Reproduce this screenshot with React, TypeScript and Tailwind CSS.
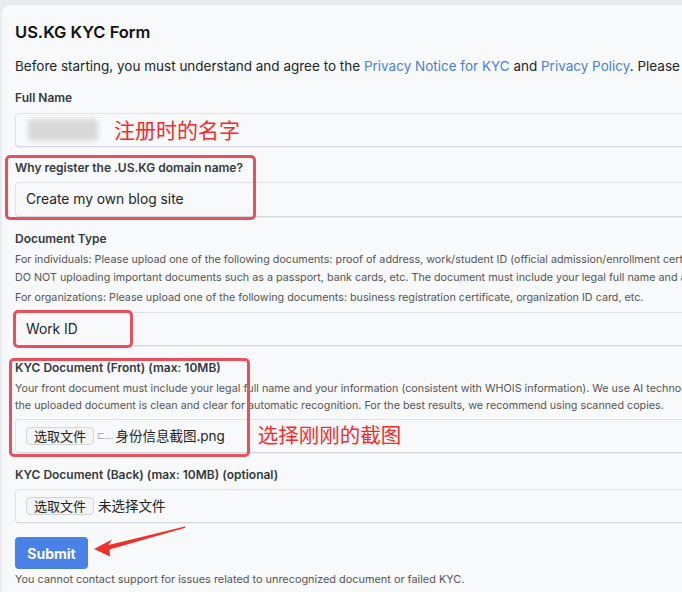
import React from "react";

const Label = ({ children, className = "" }: { children: React.ReactNode; className?: string }) => (
  <div className={`text-[12px] leading-[16px] font-semibold text-[#343a40] ${className}`}>{children}</div>
);

const Field = ({ children, className = "" }: { children: React.ReactNode; className?: string }) => (
  <div
    className={`h-[34px] flex items-center px-[10px] bg-[#f8f9fa] border border-[#dee2e6] border-b-[#d3d7db] rounded-[4px] shadow-[0_1px_0_rgba(0,0,0,0.04)] ${className}`}
  >
    {children}
  </div>
);

const FileButton = () => (
  <span className="inline-flex items-center justify-center h-[18px] px-[7px] text-[13px] leading-none text-[#222] bg-[#f4f4f4] border border-[#d6d6d6] rounded-[4px]">
    选取文件
  </span>
);

const Annotation = ({ className }: { className: string }) => (
  <div className={`absolute border-[3px] border-[#e9505d] rounded-[5px] pointer-events-none ${className}`} />
);

export default function App() {
  return (
    <div className="relative w-full h-[592px] overflow-hidden bg-[#e9ecef] pt-[5px] pl-[2px] font-['Inter','Noto_Sans_CJK_SC',sans-serif] text-[#212529]">
      <div className="relative w-[1000px] bg-[#f8f9fa] rounded-tl-[8px] pl-[13px] pt-[15px] pb-[40px]">
        <h1 className="text-[16.5px] leading-[24px] font-semibold text-[#111]">US.KG KYC Form</h1>

        <p className="mt-[12px] text-[13.5px] leading-[20px] whitespace-nowrap">
          Before starting, you must understand and agree to the{" "}
          <span className="text-[#4a7fd6]">Privacy Notice for KYC</span> and{" "}
          <span className="text-[#4a7fd6]">Privacy Policy</span>. Please read them carefully before submitting.
        </p>

        <Label className="mt-[14px]">Full Name</Label>
        <Field className="mt-[7px]">
          <div className="w-[70px] h-[22px] ml-[2px] bg-[#d9d9d9] blur-[2px] rounded-sm" />
          <span className="ml-[16px] text-[21px] leading-none text-[#f52a2a]">注册时的名字</span>
        </Field>

        <Label className="mt-[13px]">Why register the .US.KG domain name?</Label>
        <Field className="mt-[6px] h-[35px]">
          <span className="text-[13.8px]">Create my own blog site</span>
        </Field>

        <Label className="mt-[14px]">Document Type</Label>
        <div className="mt-[4px] text-[10.75px] leading-[18px] text-[#555] whitespace-nowrap">
          For individuals: Please upload one of the following documents: proof of address, work/student ID (official admission/enrollment certificate), utility bill, etc.
          <br />
          DO NOT uploading important documents such as a passport, bank cards, etc. The document must include your legal full name and address.
        </div>
        <div className="mt-[2px] text-[10.75px] leading-[18px] text-[#555] whitespace-nowrap">
          For organizations: Please upload one of the following documents: business registration certificate, organization ID card, etc.
        </div>
        <Field className="mt-[5px]">
          <span className="text-[13.8px]">Work ID</span>
        </Field>

        <Label className="mt-[14px]">KYC Document (Front) (max: 10MB)</Label>
        <div className="mt-[4px] text-[10.75px] leading-[17px] text-[#555] whitespace-nowrap">
          Your front document must include your legal full name and your information (consistent with WHOIS information). We use AI technology to verify, so please make sure
          <br />
          the uploaded document is clean and clear for automatic recognition. For the best results, we recommend using scanned copies.
        </div>
        <Field className="mt-[5px] gap-[3px]">
          <FileButton />
          <span className="text-[9px] text-[#aaa] tracking-[-1px]">⊏‥‥</span>
          <span className="text-[13.5px] text-[#222]">身份信息截图.png</span>
          <span className="ml-[30px] text-[20.5px] leading-none text-[#f52a2a]">选择刚刚的截图</span>
        </Field>

        <Label className="mt-[14px]">KYC Document (Back) (max: 10MB) (optional)</Label>
        <Field className="mt-[6px] gap-[4px]">
          <FileButton />
          <span className="text-[13.5px] text-[#222]">未选择文件</span>
        </Field>

        <button className="mt-[14px] w-[73px] h-[32px] rounded-[4px] bg-[#4a81e6] text-white text-[14px] font-bold">
          Submit
        </button>
        <div className="mt-[3px] text-[10.9px] leading-[15px] text-[#555] whitespace-nowrap">
          You cannot contact support for issues related to unrecognized document or failed KYC.
        </div>

        <Annotation className="left-[3px] top-[150px] w-[251px] h-[65px]" />
        <Annotation className="left-[11px] top-[305px] w-[120px] h-[38px]" />
        <Annotation className="left-[7px] top-[353px] w-[241px] h-[99px]" />
      </div>

      <svg className="absolute left-0 top-0 pointer-events-none" width="682" height="592" viewBox="0 0 682 592">
        <polygon
          points="94,549 112,539.5 108.5,545 185,526.5 185.5,527.8 109.5,549.5 110,556.5"
          fill="#f0302a"
        />
      </svg>
    </div>
  );
}
